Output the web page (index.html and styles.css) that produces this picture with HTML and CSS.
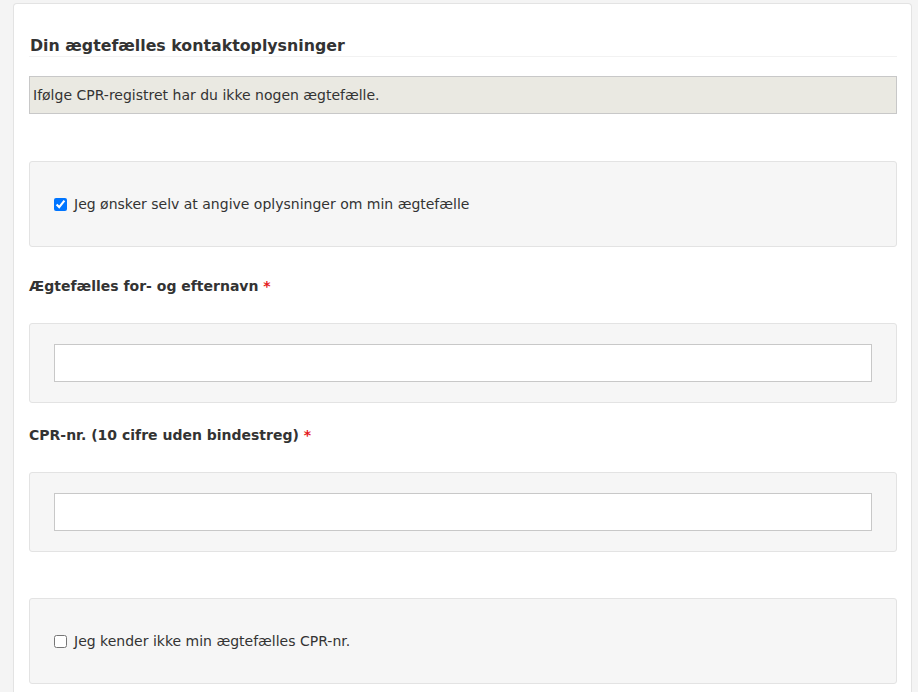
FILE: index.html
```html
<!DOCTYPE html>
<html lang="da">
<head>
<meta charset="utf-8">
<title>Din ægtefælles kontaktoplysninger</title>
<link rel="stylesheet" href="styles.css">
</head>
<body>
<div class="page">
  <div class="card">
    <h2 class="heading">Din ægtefælles kontaktoplysninger</h2>
    <div class="info">Ifølge CPR-registret har du ikke nogen ægtefælle.</div>

    <div class="panel panel-check first-check">
      <label class="check"><input type="checkbox" checked> Jeg ønsker selv at angive oplysninger om min ægtefælle</label>
    </div>

    <div class="field-label label-name">Ægtefælles for- og efternavn <span class="req">*</span></div>
    <div class="panel panel-input">
      <input class="text" type="text">
    </div>

    <div class="field-label label-cpr">CPR-nr. (10 cifre uden bindestreg) <span class="req">*</span></div>
    <div class="panel panel-input">
      <input class="text" type="text">
    </div>

    <div class="panel panel-check last-check">
      <label class="check"><input type="checkbox"> Jeg kender ikke min ægtefælles CPR-nr.</label>
    </div>
  </div>
</div>
</body>
</html>
```

FILE: styles.css
```css
html, body {
  margin: 0;
  padding: 0;
  background: #f4f4f4;
  font-family: "DejaVu Sans", Verdana, sans-serif;
  color: #333;
}

.page {
  padding: 3px 6px 0 13px;
  height: 689px;
  overflow: hidden;
}

.card {
  background: #fff;
  border: 1px solid #e3e3e3;
  border-radius: 4px 4px 0 0;
  border-bottom: none;
  padding: 33px 14px 40px 15px;
  min-height: 700px;
}

.heading {
  margin: 0;
  font-size: 15.8px;
  line-height: 18px;
  font-weight: bold;
  color: #333;
  padding: 0 0 1px 1px;
  border-bottom: 1px solid #f2f2f2;
}

.info {
  margin-top: 19px;
  background: #eae9e2;
  border: 1px solid #c8c8c8;
  padding: 10px 3px;
  font-size: 14px;
  line-height: 16px;
  color: #333;
}

.panel {
  background: #f6f6f6;
  border: 1px solid #e3e3e3;
  border-radius: 3px;
}

.panel-check {
  padding: 33px 24px;
}

.first-check {
  margin-top: 47px;
}

.last-check {
  margin-top: 46px;
}

.check {
  display: flex;
  align-items: center;
  font-size: 14px;
  line-height: 18px;
  color: #333;
}

.check input {
  margin: 0 7px 0 0;
  width: 13px;
  height: 13px;
}

.field-label {
  font-size: 14px;
  line-height: 18px;
  font-weight: bold;
  color: #333;
  margin-bottom: 28px;
}

.label-name {
  margin-top: 30px;
}

.label-cpr {
  margin-top: 23px;
}

.req {
  color: #e4191b;
}

.panel-input {
  padding: 20px 24px;
}

.text {
  display: block;
  box-sizing: border-box;
  width: 100%;
  height: 38px;
  margin: 0;
  border: 1px solid #c8c8c8;
  background: #fff;
  padding: 4px 6px;
  font-family: inherit;
  font-size: 14px;
}
```
